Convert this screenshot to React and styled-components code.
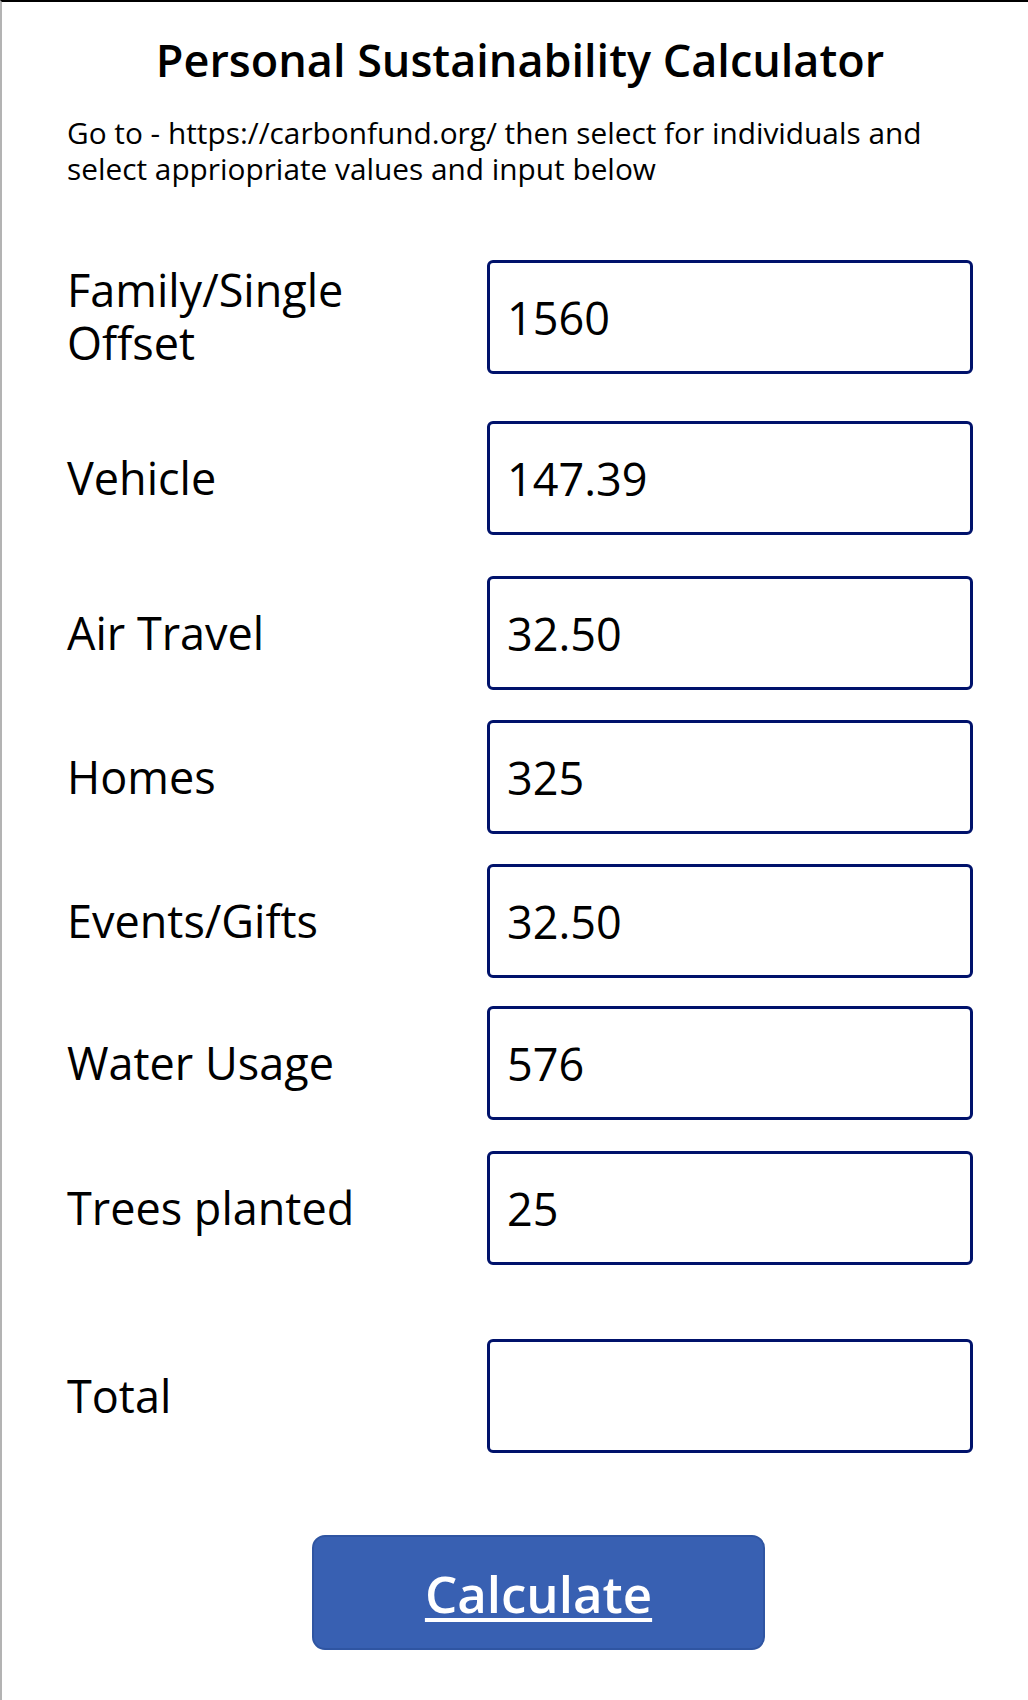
import React from "react";
import styled, { createGlobalStyle } from "styled-components";

const Global = createGlobalStyle`
  * { box-sizing: border-box; }
  html, body { margin: 0; padding: 0; background: #ffffff; }
  body { font-family: "Open Sans", "Noto Sans", sans-serif; color: #000; }
`;

const Page = styled.div`
  min-height: 1700px;
  border-top: 2px solid #000;
  border-left: 2px solid #b3b3b3;
  padding: 0 18px 40px 65px;
  display: flex;
  flex-direction: column;
  background: #fff;
`;

const Title = styled.h1`
  margin: 31px 0 0 0;
  padding-right: 37px;
  font-size: 45px;
  line-height: 54px;
  font-weight: 600;
  text-align: center;
  color: #000;
`;

const Intro = styled.p`
  margin: 28px 0 0 0;
  width: 900px;
  font-size: 29.8px;
  line-height: 36px;
  font-weight: 400;
  color: #000;
`;

const Form = styled.div`
  display: flex;
  flex-direction: column;
  margin-top: 73px;
`;

const Row = styled.div`
  display: grid;
  grid-template-columns: 330px 486px;
  column-gap: 90px;
  align-items: center;
  margin-top: ${(p) => p.$gap}px;
`;

const Label = styled.label`
  font-size: 45px;
  line-height: 53px;
  font-weight: 400;
  color: #000;
  margin-top: -2px;
`;

const Field = styled.input`
  width: 486px;
  height: 114px;
  border: 3px solid #00126b;
  border-radius: 6px;
  padding: 0 0 0 17px;
  font-family: "Open Sans", "Noto Sans", sans-serif;
  font-size: 45px;
  color: #000;
  background: #fff;
  outline: none;
`;

const ButtonRow = styled.div`
  display: flex;
  justify-content: center;
  margin-top: 82px;
`;

const CalcButton = styled.button`
  width: 453px;
  height: 115px;
  background: #3860b2;
  border: 2px solid #2f55a2;
  border-radius: 13px;
  color: #fff;
  font-family: "Open Sans", "Noto Sans", sans-serif;
  font-size: 51px;
  font-weight: 600;
  text-decoration: underline;
  text-decoration-thickness: 4px;
  text-underline-offset: 5px;
  cursor: pointer;
  padding: 0;
`;

const fields = [
  { label: "Family/Single Offset", value: "1560", gap: 0 },
  { label: "Vehicle", value: "147.39", gap: 47 },
  { label: "Air Travel", value: "32.50", gap: 41 },
  { label: "Homes", value: "325", gap: 30 },
  { label: "Events/Gifts", value: "32.50", gap: 30 },
  { label: "Water Usage", value: "576", gap: 28 },
  { label: "Trees planted", value: "25", gap: 31 },
  { label: "Total", value: "", gap: 74 },
];

export default function App() {
  return (
    <>
      <Global />
      <Page>
        <Title>Personal Sustainability Calculator</Title>
        <Intro>
          Go to - https://carbonfund.org/ then select for individuals and select
          appriopriate values and input below
        </Intro>
        <Form>
          {fields.map((f) => (
            <Row key={f.label} $gap={f.gap}>
              <Label>{f.label}</Label>
              <Field type="text" defaultValue={f.value} />
            </Row>
          ))}
        </Form>
        <ButtonRow>
          <CalcButton type="button">Calculate</CalcButton>
        </ButtonRow>
      </Page>
    </>
  );
}
